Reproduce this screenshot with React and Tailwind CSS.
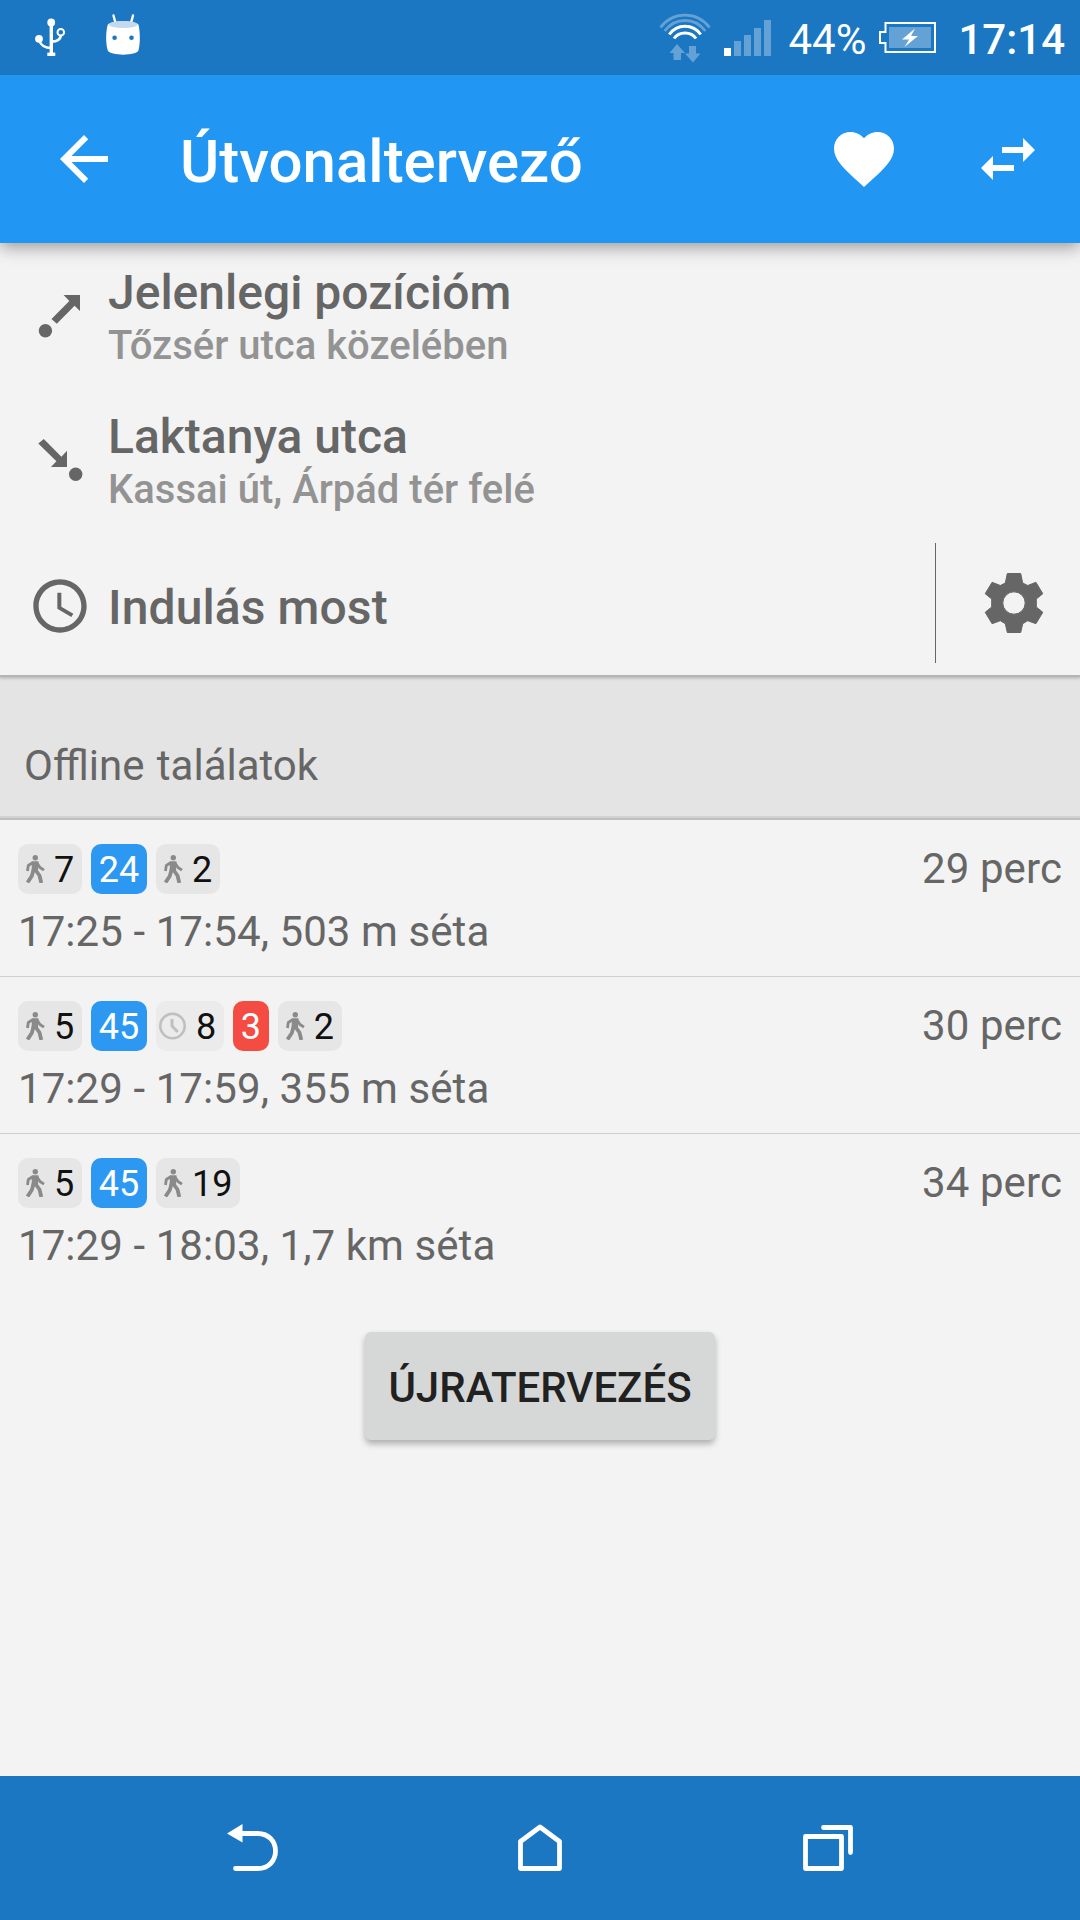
const results = [
  {
    legs: [
      { type: 'walk', value: '7' },
      { type: 'bus', value: '24' },
      { type: 'walk', value: '2' }
    ],
    duration: '29 perc',
    details: '17:25 - 17:54, 503 m séta'
  },
  {
    legs: [
      { type: 'walk', value: '5' },
      { type: 'bus', value: '45' },
      { type: 'wait', value: '8' },
      { type: 'trolley', value: '3' },
      { type: 'walk', value: '2' }
    ],
    duration: '30 perc',
    details: '17:29 - 17:59, 355 m séta'
  },
  {
    legs: [
      { type: 'walk', value: '5' },
      { type: 'bus', value: '45' },
      { type: 'walk', value: '19' }
    ],
    duration: '34 perc',
    details: '17:29 - 18:03, 1,7 km séta'
  }
]

function StatusBar() {
  return (
    <div className="relative z-20 h-[75px] shrink-0 bg-[#1b77c2] flex items-center justify-between pl-[34px] pr-[15px] text-white">
      <div className="flex items-center gap-[39px]">
        {/* USB */}
        <svg className="w-8 h-[75px]" viewBox="0 0 32 75" fill="none" stroke="#fff">
          <path d="M17.3 22v32" strokeWidth="3.4" />
          <path d="M13.3 54.3h8" strokeWidth="3.4" />
          <path d="M5.2 40c1.2 5 6 8 12 8" strokeWidth="2.6" />
          <path d="M17.5 41.6c6 0 9-2.6 9.4-6.2" strokeWidth="2.6" />
          <circle cx="17.2" cy="22.5" r="3.9" fill="#fff" stroke="none" />
          <circle cx="5" cy="38.8" r="3.9" fill="#fff" stroke="none" />
          <circle cx="26.8" cy="32.3" r="3.3" strokeWidth="2" />
        </svg>
        {/* Android */}
        <svg className="w-9 h-[75px]" viewBox="0 0 36 75">
          <path d="M8.5 15.5l2 7.5M28 15.5l-2 7.5" stroke="#fff" strokeWidth="2.4" strokeLinecap="round" />
          <path d="M2.8 24.5C7 20 29 20 33.4 24.5c1.8 7 2 19 0 26C31.5 56 5 56 2.8 50.5c-2.3-7-2.1-19 0-26z" fill="#fff" />
          <ellipse cx="18.2" cy="24.5" rx="14.3" ry="3.6" fill="#c3d9ee" />
          <circle cx="9.6" cy="37.8" r="2.3" fill="#1b77c2" />
          <circle cx="26.5" cy="37.8" r="2.3" fill="#1b77c2" />
        </svg>
      </div>

      <div className="flex items-center">
        {/* Wifi + traffic arrows */}
        <svg className="w-[52px] h-[75px]" viewBox="0 0 52 75" fill="none">
          <path d="M1.5 27.5C14 11 38 11 50.5 27.5" stroke="#64a2d6" strokeWidth="2.8" />
          <path d="M5.7 31C16 17 36 17 46.3 31" stroke="#64a2d6" strokeWidth="2.8" />
          <path d="M10.3 34.5C18 23.5 34 23.5 41.7 34.5" stroke="#fff" strokeWidth="3" />
          <path d="M15 38.5c5-7.5 17-7.5 22 0" stroke="#fff" strokeWidth="3" />
          <path d="M18 44l8 9h-4v7h-7.5v-7h-4z" fill="#64a2d6" />
          <path d="M34 62.5l-8-9h4V46h7v7.5h4.5z" fill="#64a2d6" />
        </svg>
        {/* Signal */}
        <div className="ml-[13px] mt-px h-9 flex items-end gap-[3px]">
          <div className="w-[7px] h-2 bg-white"></div>
          <div className="w-[7px] h-[15px] bg-[#64a2d6]"></div>
          <div className="w-[7px] h-[21px] bg-[#64a2d6]"></div>
          <div className="w-[7px] h-7 bg-[#64a2d6]"></div>
          <div className="w-[7px] h-9 bg-[#64a2d6]"></div>
        </div>
        <span className="ml-[17px] mt-[4px] text-[42px] leading-[48px]">44%</span>
        {/* Battery */}
        <svg className="ml-[13px] w-[58px] h-[75px]" viewBox="0 0 58 75" fill="none">
          <path d="M6.5 23h49.5v29H6.5v-9H1V32h5.5z" stroke="#fff" strokeWidth="2" />
          <path d="M10 27h42v21H10z" fill="#64a2d6" />
          <path d="M36 28.5L23 39.5h7L25.5 47 39 36h-7z" fill="#fff" />
        </svg>
        <span className="ml-[21px] mt-[4px] text-[42px] leading-[48px] font-medium">17:14</span>
      </div>
    </div>
  )
}

function AppBar() {
  return (
    <header className="relative z-10 h-[168px] shrink-0 bg-[#2196f3] flex items-center pl-12 pr-9 text-white shadow-[0_4px_16px_rgba(0,0,0,0.38)]">
      <svg className="w-[72px] h-[72px]" viewBox="0 0 24 24" fill="currentColor">
        <path d="M20 11H7.83l5.59-5.59L12 4l-8 8 8 8 1.41-1.41L7.83 13H20v-2z" />
      </svg>
      <h1 className="ml-[60px] pt-[5px] flex-1 text-[60px] leading-[72px] font-medium">Útvonaltervező</h1>
      <svg className="w-[72px] h-[72px]" viewBox="0 0 24 24" fill="currentColor">
        <path d="M12 21.35l-1.45-1.32C5.4 15.36 2 12.28 2 8.5 2 5.42 4.42 3 7.5 3c1.74 0 3.41.81 4.5 2.09C13.09 3.81 14.76 3 16.5 3 19.58 3 22 5.42 22 8.5c0 3.78-3.4 6.86-8.55 11.54L12 21.35z" />
      </svg>
      <svg className="ml-[72px] w-[72px] h-[72px]" viewBox="0 0 24 24" fill="currentColor">
        <path d="M6.99 11L3 15l3.99 4v-3H14v-2H6.99v-3zM21 9l-3.99-4v3H10v2h7.01v3L21 9z" />
      </svg>
    </header>
  )
}

function StopRow({ icon, name, info }) {
  return (
    <div className="h-36 flex pl-9">
      <svg className="mt-12 w-12 h-12" viewBox="0 0 48 48" fill="#666">
        {icon}
      </svg>
      <div className="ml-6 pt-[22px]">
        <div className="text-[48px] leading-[56px] font-medium text-[#666]">{name}</div>
        <div className="pt-px text-[40px] leading-[48px] font-medium text-[#939393]">{info}</div>
      </div>
    </div>
  )
}

function SearchPanel() {
  return (
    <section className="relative h-[432px] shrink-0 bg-[#f3f3f3] shadow-[0_2px_1px_#b4b6b5,0_4px_2px_#c4c4c4]">
      <StopRow
        icon={
          <>
            <circle cx="9.4" cy="39.7" r="6.7" />
            <path d="M27.6 4H44v16l-5.4-5.3L20.8 32.8 15.5 28 33.3 10z" />
          </>
        }
        name="Jelenlegi pozícióm"
        info="Tőzsér utca közelében"
      />
      <StopRow
        icon={
          <>
            <path d="M7.8 4L2.3 8.5l18.1 17.8L15 32h16V15.7l-5.6 6z" />
            <circle cx="39.7" cy="39.3" r="6.7" />
          </>
        }
        name="Laktanya utca"
        info="Kassai út, Árpád tér felé"
      />
      <div className="h-36 flex items-center pl-7 pr-[30px] text-[#666]">
        <svg className="mt-1.5 w-16 h-16" viewBox="0 0 24 24" fill="currentColor">
          <path d="M11.99 2C6.47 2 2 6.48 2 12s4.47 10 9.99 10C17.52 22 22 17.52 22 12S17.52 2 11.99 2zM12 20c-4.42 0-8-3.58-8-8s3.58-8 8-8 8 3.58 8 8-3.58 8-8 8z" />
          <path d="M12.5 7H11v6l5.25 3.15.75-1.23-4.5-2.67z" />
        </svg>
        <div className="ml-4 mt-[9px] flex-1 text-[48px] leading-[56px] font-medium tracking-[0.1px]">Indulás most</div>
        <div className="w-px h-[120px] bg-[#666]"></div>
        {/* Settings */}
        <svg className="ml-[42px] w-[72px] h-[72px]" viewBox="0 0 72 72" fill="currentColor" stroke="currentColor" strokeWidth="1" strokeLinejoin="round">
          <path fillRule="evenodd" d="M29.3 6.5h13.4l2 9.5 5 2.5 8.2-3.2 6.9 11.4-6.5 5.3v8l6.5 5.3-6.9 11.4-8.2-3-5 3-2 8.8H29.3l-2-8.8-5-3-8.2 3L7.2 45.3l6.5-5.3v-8l-6.5-5.3 6.9-11.4 8.2 3.2 5-2.5zM36 24.8a11.2 11.2 0 100 22.4 11.2 11.2 0 000-22.4z" />
        </svg>
      </div>
    </section>
  )
}

function Leg({ type, value }) {
  switch (type) {
    case 'walk':
      return (
        <span className="h-[50px] flex items-center rounded-[10px] bg-[#e6e6e6] pl-1.5 pr-[7.75px] text-[#111]">
          <svg className="w-[22px] h-7" viewBox="0 0 22 28" fill="none" stroke="#8a8a8a" strokeLinejoin="round">
            <circle cx="11.3" cy="2.8" r="2.7" fill="#8a8a8a" stroke="none" />
            <path d="M8 6.3h6.5L14 16.5H7.5z" fill="#8a8a8a" stroke="none" />
            <path d="M9 7.5L4.3 10.5 3.5 16M13 8l3 4.5 4 2.6" strokeWidth="2.8" />
            <path d="M9.5 15L7.8 21 3.5 27.5M11.5 15l4 5.5 1.8 7.5" strokeWidth="3.8" />
          </svg>
          <span className="ml-2 mt-px text-[36px] leading-[48px]">{value}</span>
        </span>
      )
    case 'wait':
      return (
        <span className="h-[50px] flex items-center rounded-[10px] bg-[#ebebeb] pl-[3px] pr-[7.75px] text-[#111]">
          <svg className="w-7 h-7" viewBox="0 0 28 28" fill="none" stroke="#bfbfbf">
            <circle cx="13.5" cy="14" r="12.2" strokeWidth="2.6" />
            <path d="M13 7v7l5.7 6" strokeWidth="3" />
          </svg>
          <span className="ml-[9px] mt-px text-[36px] leading-[48px]">{value}</span>
        </span>
      )
    case 'trolley':
      return (
        <span className="h-[50px] flex items-center rounded-[10px] bg-[#f44b42] px-[7.75px] pt-px text-[36px] leading-[48px] text-white">{value}</span>
      )
    default:
      return (
        <span className="h-[50px] flex items-center rounded-[10px] bg-[#2c98f2] px-[7.75px] pt-px text-[36px] leading-[48px] text-white">{value}</span>
      )
  }
}

function ResultRow({ result, last }) {
  return (
    <li className={`h-[157px] px-[18px] pt-6 text-[42px] leading-[48px] text-[#666] ${last ? '' : 'border-b border-[#cfcfcf]'}`}>
      <div className="flex items-center justify-between">
        <div className="flex gap-[9px]">
          {result.legs.map((leg, i) => (
            <Leg key={i} type={leg.type} value={leg.value} />
          ))}
        </div>
        <span className="tracking-[0.1px]">{result.duration}</span>
      </div>
      <div className="mt-3.5 tracking-[0.08px]">{result.details}</div>
    </li>
  )
}

function NavBar() {
  return (
    <nav className="h-36 shrink-0 bg-[#1b77c2] flex items-center justify-between px-[216px] pt-[15px]">
      <svg className="w-[72px] h-[72px]" viewBox="0 0 72 72" fill="none" stroke="#fff" strokeWidth="4.8" strokeLinecap="round">
        <path d="M25 13.5h16.5c24 0 24 35 0 35h-22" />
        <path d="M11 13.5L26.5 4v18.5z" fill="#fff" stroke="none" />
      </svg>
      <svg className="w-[72px] h-[72px]" viewBox="0 0 72 72" fill="none" stroke="#fff" strokeWidth="4.8" strokeLinejoin="round">
        <path d="M16.5 48.5v-27L36 7l19.5 14.5v27z" />
      </svg>
      <svg className="w-[72px] h-[72px]" viewBox="0 0 72 72" fill="none" stroke="#fff" strokeWidth="4.8" strokeLinejoin="round" strokeLinecap="round">
        <path d="M13.5 16.5h36v32h-36z" />
        <path d="M31.5 7.5h27v25" />
      </svg>
    </nav>
  )
}

export default function App() {
  return (
    <div className="w-[1080px] h-[1920px] flex flex-col overflow-hidden bg-[#f3f3f3] font-['Roboto',sans-serif]">
      <StatusBar />
      <AppBar />
      <SearchPanel />

      <div className="h-[145px] shrink-0 bg-[#e4e4e4] flex items-end pl-6 pb-[30px] shadow-[inset_0_-2px_0_#bfbfbf,inset_0_-4px_0_#d2d2d2] text-[42px] leading-[48px] text-[#666] [word-spacing:2px]">
        Offline találatok
      </div>

      <main className="flex-1">
        <ul>
          {results.map((result, i) => (
            <ResultRow key={i} result={result} last={i === results.length - 1} />
          ))}
        </ul>
        <div className="mt-[41px] flex justify-center">
          <button className="h-[108px] w-[350px] rounded-md bg-[#d6d8d7] pt-[3px] text-[42px] leading-[48px] font-medium text-[#212121] shadow-[0_4px_6px_rgba(0,0,0,0.28)]">
            ÚJRATERVEZÉS
          </button>
        </div>
      </main>

      <NavBar />
    </div>
  )
}
